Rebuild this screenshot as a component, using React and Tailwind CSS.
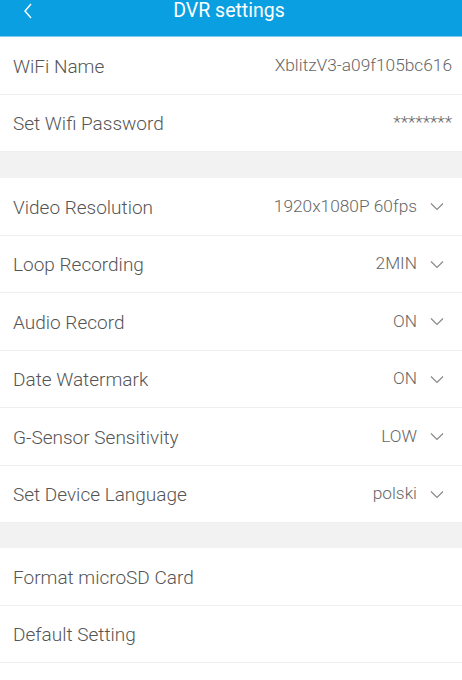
import React from 'react';

const Chevron = () => (
  <svg width="14" height="9" viewBox="0 0 14 9" className="ml-[13px] mr-[8px]">
    <path d="M1 1.5 L7 7.5 L13 1.5" fill="none" stroke="#888" strokeWidth="1.2" />
  </svg>
);

const Row = ({ label, value, select }) => (
  <div className="flex items-center justify-between h-[57.5px] pl-[13px] pr-[10px] border-b border-[#efefef] bg-white">
    <span className="text-[19px] font-light text-[#555] pt-[3px]">{label}</span>
    {value && (
      <span className="flex items-center text-[17.3px] font-light text-[#666] pt-[1px]">
        {value}
        {select && <Chevron />}
      </span>
    )}
  </div>
);

export default function App() {
  return (
    <div className="w-[462px] h-[680px] bg-white overflow-hidden font-['Roboto',sans-serif]">
      <div className="relative flex justify-center h-[37px] bg-[#0a9fe0] border-b border-[#7cc9ee]">
        <svg width="10" height="16" viewBox="0 0 10 16" className="absolute left-[23px] top-[3px]">
          <path d="M8 1 L2 8 L8 15" fill="none" stroke="#fff" strokeWidth="1.4" />
        </svg>
        <span className="text-white text-[19.5px] leading-none pt-[1px] -ml-[4px]">DVR settings</span>
      </div>
      <Row label="WiFi Name" value="XblitzV3-a09f105bc616" />
      <Row label="Set Wifi Password" value="********" />
      <div className="h-[26px] bg-[#f2f2f2]" />
      <Row label="Video Resolution" value="1920x1080P 60fps" select />
      <Row label="Loop Recording" value="2MIN" select />
      <Row label="Audio Record" value="ON" select />
      <Row label="Date Watermark" value="ON" select />
      <Row label="G-Sensor Sensitivity" value="LOW" select />
      <Row label="Set Device Language" value="polski" select />
      <div className="h-[25px] bg-[#f2f2f2]" />
      <Row label="Format microSD Card" />
      <Row label="Default Setting" />
    </div>
  );
}
